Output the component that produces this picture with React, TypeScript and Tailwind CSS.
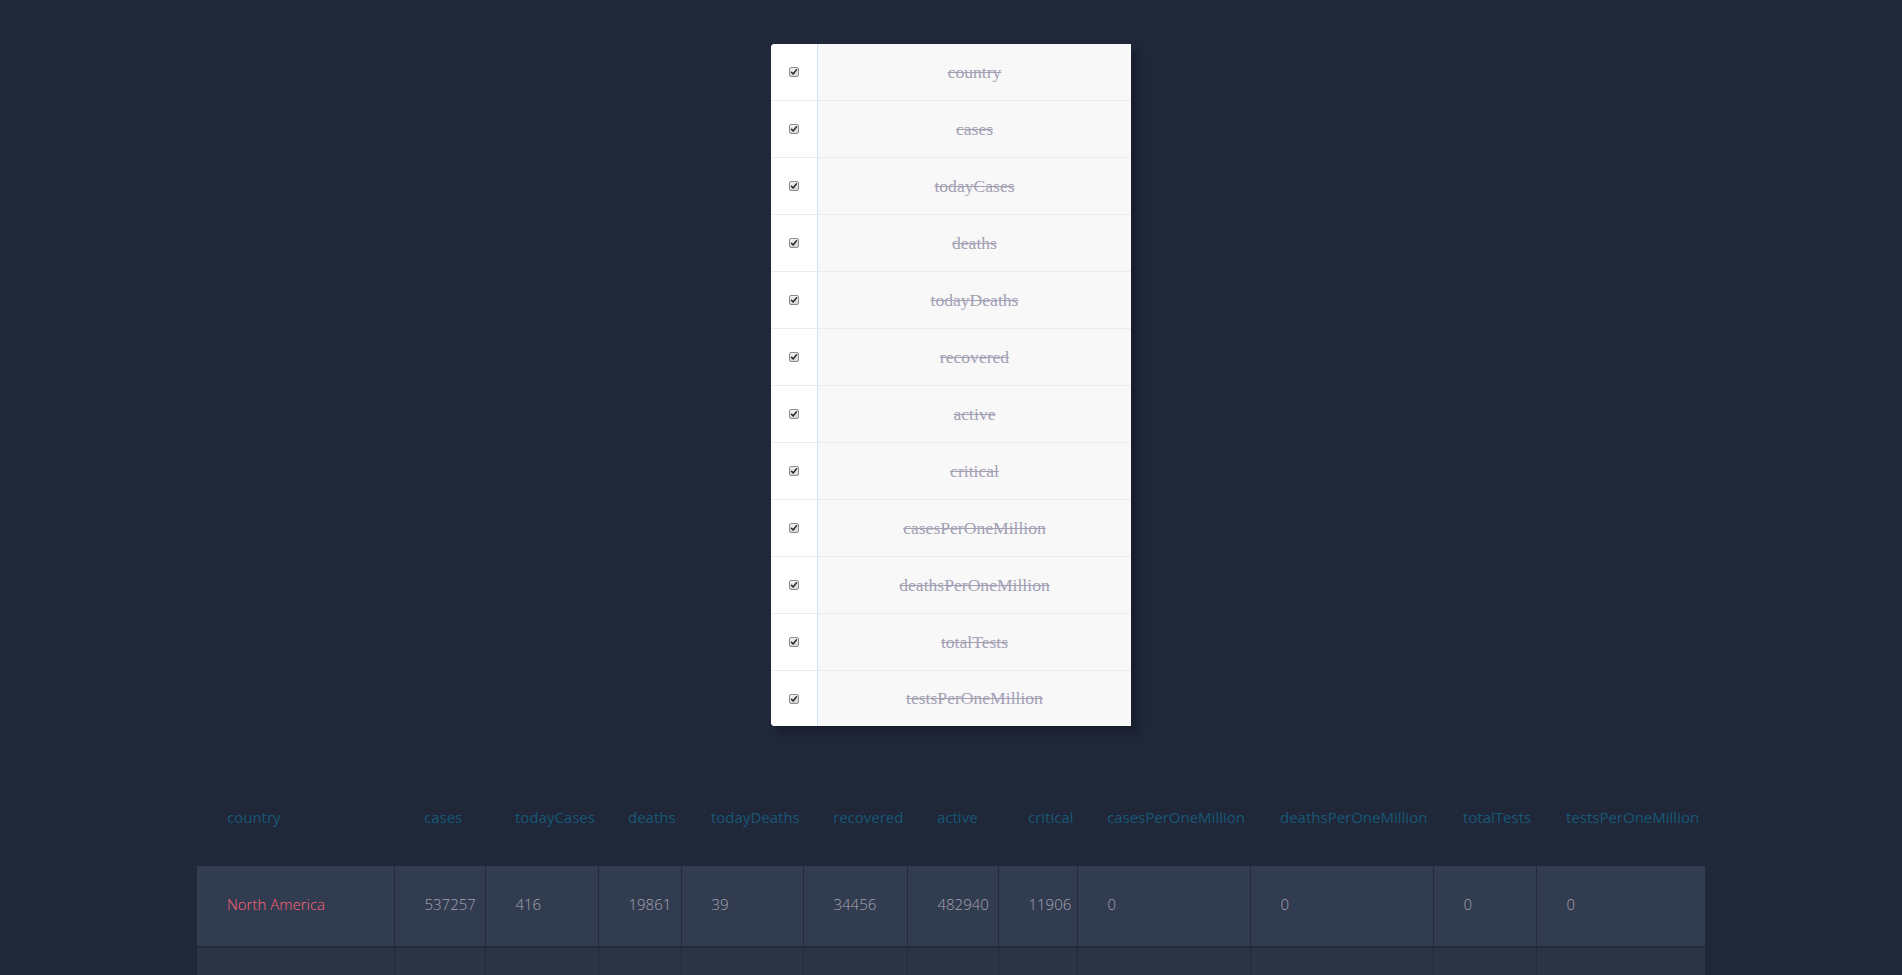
import React from 'react';

const columns = [
  'country',
  'cases',
  'todayCases',
  'deaths',
  'todayDeaths',
  'recovered',
  'active',
  'critical',
  'casesPerOneMillion',
  'deathsPerOneMillion',
  'totalTests',
  'testsPerOneMillion',
];

// measured column widths of the stats table
const widths = [197, 91, 113, 83, 122, 104, 91, 79, 173, 183, 103, 169];

const rows = [
  ['North America', 537257, 416, 19861, 39, 34456, 482940, 11906, 0, 0, 0, 0],
  ['Europe', 912114, 1221, 78120, 65, 214502, 619492, 25744, 0, 0, 0, 0],
];

function Check() {
  return (
    <span className="flex h-[10px] w-[10px] items-center justify-center rounded-[2px] border border-[#8d8d8d] bg-gradient-to-b from-[#f2f2f2] to-[#d6d6d6]">
      <svg viewBox="0 0 10 10" className="h-[8px] w-[8px]">
        <path d="M1.8 5.4 L3.9 7.4 L8.2 2.2" fill="none" stroke="#2b2b2b" strokeWidth="1.9" strokeLinecap="round" strokeLinejoin="round" />
      </svg>
    </span>
  );
}

export default function App() {
  return (
    <div className="min-h-screen bg-[#1F2739] pt-[44px] pb-10 font-['Open_Sans',sans-serif]">
      {/* column toggles */}
      <div className="mx-auto w-[360px] overflow-hidden rounded-l-[4px] bg-white shadow-[7px_7px_6px_rgba(0,0,0,0.22)]">
        {columns.map((c, i) => (
          <div
            key={c}
            className={`flex ${i === columns.length - 1 ? 'h-[55px]' : 'h-[57px] border-b border-[#ececec]'}`}
          >
            <div className="flex w-[47px] shrink-0 items-center justify-center border-r border-[#cfe2fb] bg-white">
              <Check />
            </div>
            <div className="flex flex-1 items-center justify-center bg-[#f8f8f8] font-['Liberation_Serif',serif] text-[17.6px] text-[#a3a0b4] line-through">
              {c}
            </div>
          </div>
        ))}
      </div>

      {/* stats table */}
      <table className="mx-auto mt-[44px] w-[1508px] table-fixed border-collapse text-[15px] font-light">
        <colgroup>
          {widths.map((w, i) => (
            <col key={i} style={{ width: w }} />
          ))}
        </colgroup>
        <thead>
          <tr>
            {columns.map((c) => (
              <th key={c} className="h-[96px] whitespace-nowrap pb-[2px] pl-[30px] text-left align-middle font-normal text-[#185875]">
                {c}
              </th>
            ))}
          </tr>
        </thead>
        <tbody>
          {rows.map((r, i) => (
            <tr key={i} className={i % 2 === 0 ? 'bg-[#323C50]' : 'bg-[#2C3446]'}>
              {r.map((v, j) => (
                <td
                  key={j}
                  className={`whitespace-nowrap border-b-2 border-r border-[#232a3b] pt-[28px] pb-[32px] pl-[30px] leading-[20px] last:border-r-0 ${
                    j === 0 ? 'text-[#FB667A]' : 'text-[#A7A1AE]'
                  }`}
                >
                  {v}
                </td>
              ))}
            </tr>
          ))}
        </tbody>
      </table>
    </div>
  );
}
